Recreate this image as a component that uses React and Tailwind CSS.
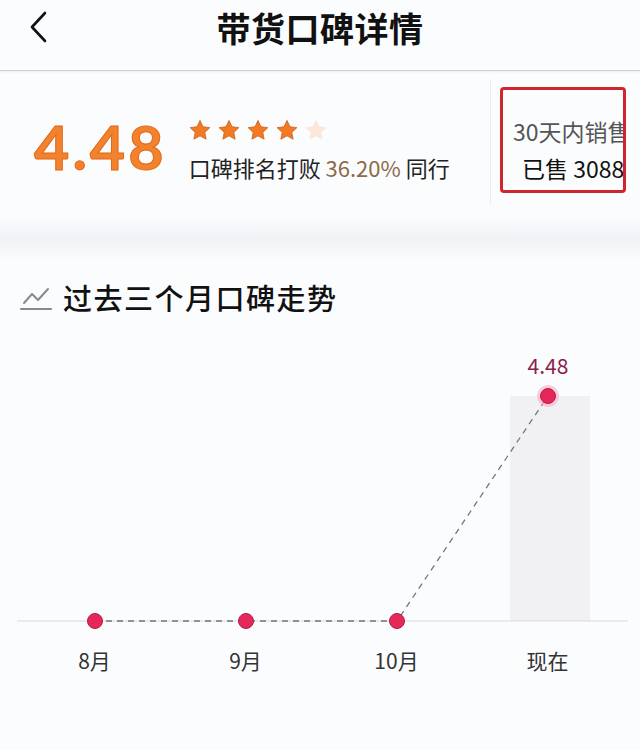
import React from 'react';

const cjk = { fontFamily: '"Noto Sans CJK SC", "Noto Sans", sans-serif' };

const months = [
    { label: '8月', x: 95, y: 621 },
    { label: '9月', x: 246, y: 621 },
    { label: '10月', x: 397, y: 621 },
    { label: '现在', x: 548, y: 396 },
];

function Star({ filled }) {
    return (
        <svg width="24" height="23" viewBox="0 0 24 24">
            <path
                d="M12 1.5l3.1 6.6 7.2.9-5.3 5 1.4 7.1L12 17.6l-6.4 3.5 1.4-7.1-5.3-5 7.2-.9z"
                fill={filled ? '#f27a22' : '#fbe7da'}
                stroke={filled ? '#c85a14' : '#fbe7da'}
                strokeWidth="0.8"
                strokeLinejoin="round"
            />
        </svg>
    );
}

function TrendIcon() {
    return (
        <svg width="34" height="28" viewBox="0 0 34 28" fill="none">
            <polyline points="5,19 13,10 19,16 29,5" stroke="#8a8a8a" strokeWidth="2" strokeLinejoin="round" strokeLinecap="round" />
            <line x1="2" y1="25" x2="32" y2="25" stroke="#8a8a8a" strokeWidth="2.2" strokeLinecap="round" />
        </svg>
    );
}

function Chart() {
    // svg top sits at y=340 on the page
    const off = 340;
    return (
        <svg width="640" height="300" viewBox="0 0 640 300" className="block">
            <rect x="510" y={396 - off} width="80" height={621 - 396} fill="#f1f1f3" />
            <line x1="17" y1={621 - off} x2="628" y2={621 - off} stroke="#d9d9dc" strokeWidth="1.2" />
            <polyline
                points={months.map(m => `${m.x},${m.y - off}`).join(' ')}
                fill="none"
                stroke="#777"
                strokeWidth="1.3"
                strokeDasharray="6 5"
            />
            <circle cx="548" cy={396 - off} r="11" fill="#f7b3c6" opacity="0.6" />
            {months.map(m => (
                <circle key={m.label} cx={m.x} cy={m.y - off} r="7.5" fill="#e6275a" stroke="#b81a45" strokeWidth="1" />
            ))}
            <text x="548" y={374 - off} textAnchor="middle" fontSize="21" fill="#8b1d4b" style={cjk}>4.48</text>
        </svg>
    );
}

export default function App() {
    return (
        <div className="w-[640px] h-[750px] bg-[#fbfcfe] overflow-hidden" style={cjk}>
            {/* header */}
            <div className="relative h-[71px] border-b border-[#cfd0d3] shadow-[0_1px_2px_rgba(0,0,0,0.06)]">
                <div className="h-[54px] flex items-center justify-center">
                    <span className="text-[34px] font-bold text-[#111] tracking-[0.5px]">带货口碑详情</span>
                </div>
                <svg className="absolute left-[27px] top-[11px]" width="22" height="32" viewBox="0 0 22 32" fill="none">
                    <polyline points="18,2 5,16 18,30" stroke="#111" strokeWidth="2.6" strokeLinecap="round" strokeLinejoin="round" />
                </svg>
            </div>

            {/* summary */}
            <div className="h-[146px] flex">
                <div className="flex-1 flex items-center pl-[34px]">
                    <span className="text-[61px] font-bold text-[#f3822c] tracking-[3px] leading-none mt-[4px]" style={{ fontFamily: 'Lato, "Noto Sans", sans-serif', WebkitTextStroke: '1px #e0681a' }}>4.48</span>
                    <div className="ml-[22px] flex flex-col mt-[8px]">
                        <div className="flex gap-[5px] -ml-[1px]">
                            <Star filled /><Star filled /><Star filled /><Star filled /><Star />
                        </div>
                        <div className="text-[22px] text-[#222] mt-[14px] leading-none">
                            口碑排名打败 <span className="text-[#8d6a48]">36.20%</span> 同行
                        </div>
                    </div>
                </div>
                <div className="w-[150px] flex items-start pt-[8px]">
                    <div className="w-px h-[126px] bg-[#ececee]" />
                    <div className="ml-[9px] mt-[8px] w-[126px] h-[106px] border-[3px] border-[#cf252c] rounded-[4px] overflow-hidden pt-[30px]">
                        <div className="whitespace-nowrap pl-[10px] text-[23px] text-[#555] leading-none">30天内销售</div>
                        <div className="whitespace-nowrap pl-[19px] mt-[14px] text-[23px] text-[#111] leading-none">已售 3088</div>
                    </div>
                </div>
            </div>

            {/* separator band */}
            <div className="h-[44px] bg-gradient-to-b from-[#fbfcfe] via-[#f1f2f5] to-[#fbfcfe]" />

            {/* trend card */}
            <div className="flex items-center pl-[19px] pt-[18px] h-[55px]">
                <TrendIcon />
                <span className="ml-[10px] text-[29px] font-medium text-[#111] tracking-[1.5px] leading-none">过去三个月口碑走势</span>
            </div>
            <div className="h-[24px]" />
            <Chart />
            <div className="grid grid-cols-4 w-[604px] ml-[19px] mt-[10px]">
                {months.map(m => (
                    <div key={m.label} className="text-center text-[21px] text-[#333] leading-none">{m.label}</div>
                ))}
            </div>
        </div>
    );
}
